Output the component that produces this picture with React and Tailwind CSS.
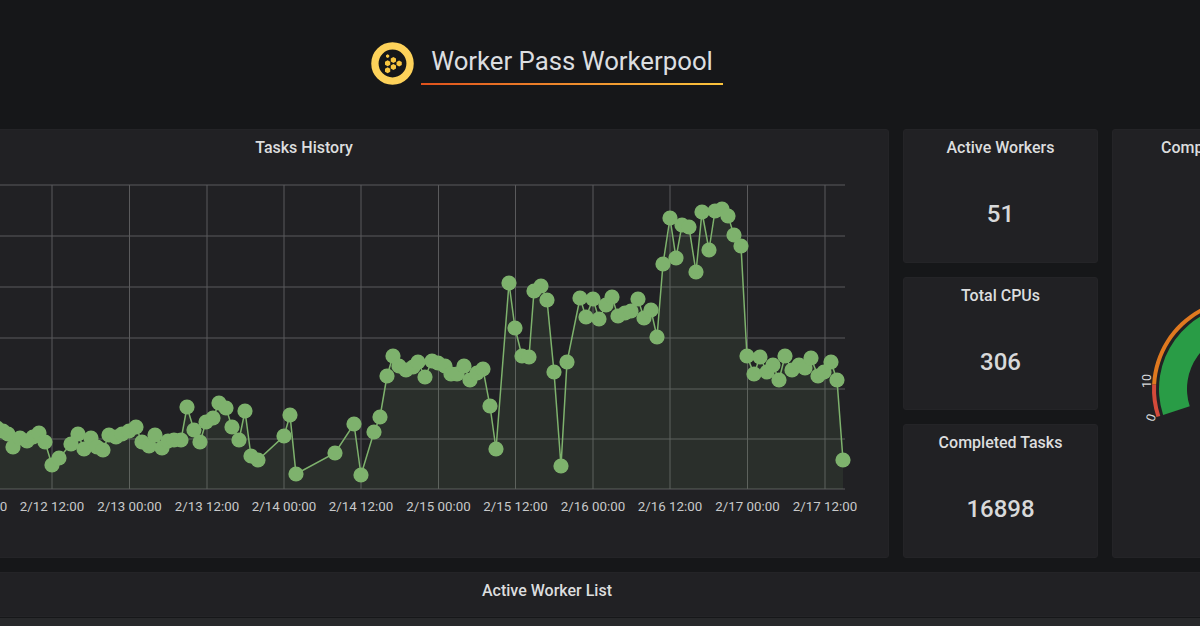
import React from "react";

const pts = [[-3,428],[3,431],[8,434],[13,447],[20,438],[27,441],[33,437],[39,433],[45,442],[52,465],[59,458],[71,444],[78,434],[84,449],[91,438],[97,447],[103,450],[109,435],[116,437],[122,434],[129,431],[136,427],[142,442],[149,446],[155,435],[162,448],[168,441],[174,440],[181,440],[187,407],[194,430],[200,442],[206,422],[213,418],[219,403],[226,408],[232,427],[239,440],[245,411],[251,456],[258,460],[284,436],[290,415],[296,474],[335,453],[354,424],[361,475],[374,432],[380,417],[387,376],[393,356],[399,366],[406,370],[413,367],[418,362],[425,377],[432,361],[438,363],[445,366],[451,374],[457,374],[464,366],[470,380],[477,373],[483,369],[490,406],[496,449],[509,283],[515,328],[522,356],[529,357],[534,291],[541,286],[547,300],[554,372],[561,466],[567,362],[580,298],[586,317],[593,299],[599,319],[606,305],[612,297],[618,316],[625,313],[631,311],[638,299],[644,318],[651,310],[657,337],[663,264],[670,218],[676,258],[682,225],[689,227],[696,272],[702,212],[709,250],[715,211],[722,209],[728,216],[734,235],[741,246],[747,356],[754,374],[760,357],[767,372],[773,365],[779,380],[785,356],[792,370],[799,365],[805,368],[811,358],[818,376],[824,372],[831,362],[837,380],[843,460]];

const vLines = [-25,52,129.5,207,284,361,438.5,515.5,593,670,747.5,825];
const hLines = [185,236,287,338,389,439,489];
const labels = [[-25,"2/12 00:00"],[52,"2/12 12:00"],[129.5,"2/13 00:00"],[207,"2/13 12:00"],[284,"2/14 00:00"],[361,"2/14 12:00"],[438.5,"2/15 00:00"],[515.5,"2/15 12:00"],[593,"2/16 00:00"],[670,"2/16 12:00"],[747.5,"2/17 00:00"],[825,"2/17 12:00"]];

function TasksChart() {
  const line = pts.map((p) => p.join(",")).join(" ");
  const area = `-60,489 ${line} 843,489`;
  return (
    <svg viewBox="-280 166 1168 391" className="block w-full h-[391px]">
      {vLines.map((x) => (
        <line key={x} x1={x} x2={x} y1={185} y2={489} stroke="#5a5a5c" strokeWidth="1" />
      ))}
      {hLines.map((y) => (
        <line key={y} x1={-265} x2={845} y1={y} y2={y} stroke="#5a5a5c" strokeWidth="1" />
      ))}
      <polygon points={area} fill="#7eb26d" fillOpacity="0.1" />
      <polyline points={line} fill="none" stroke="#7eb26d" strokeWidth="1.5" />
      {pts.map(([x, y], i) => (
        <circle key={i} cx={x} cy={y} r="7.6" fill="#7eb26d" />
      ))}
      {labels.map(([x, t]) => (
        <text key={t} x={x} y={510.5} textAnchor="middle" fontSize="13.3" fill="#c8c9ca" fontFamily="Roboto, sans-serif">
          {t}
        </text>
      ))}
    </svg>
  );
}

function polar(cx, cy, r, deg) {
  const a = (deg * Math.PI) / 180;
  return [cx + r * Math.cos(a), cy - r * Math.sin(a)];
}

function band(r1, r2, from, to) {
  const cx = 131, cy = 260;
  const large = from - to > 180 ? 1 : 0;
  const [ax, ay] = polar(cx, cy, r2, from);
  const [bx, by] = polar(cx, cy, r2, to);
  const [c, d] = polar(cx, cy, r1, to);
  const [e, f] = polar(cx, cy, r1, from);
  return `M${ax} ${ay}A${r2} ${r2} 0 ${large} 1 ${bx} ${by}L${c} ${d}A${r1} ${r1} 0 ${large} 0 ${e} ${f}Z`;
}

function Gauge() {
  return (
    <svg viewBox="1 37 261 300" className="block w-full h-[300px]">
      <path d={band(56, 84, 198, -18)} fill="#299c46" />
      <path d={band(87, 91, 198, 177)} fill="#d44a3a" />
      <path d={band(87, 91, 177, 60)} fill="#e0791f" />
      <text x={0} y={0} transform="translate(43 290) rotate(-72)" textAnchor="middle" fontSize="12.5" fill="#d8d9da" fontFamily="Roboto, sans-serif">0</text>
      <text x={0} y={0} transform="translate(39 252) rotate(-90)" textAnchor="middle" fontSize="12.5" fill="#d8d9da" fontFamily="Roboto, sans-serif">10</text>
    </svg>
  );
}

function hex(cx, cy, r) {
  return [0, 1, 2, 3, 4, 5]
    .map((i) => {
      const a = (Math.PI / 3) * i + Math.PI / 6;
      return `${cx + r * Math.cos(a)},${cy + r * Math.sin(a)}`;
    })
    .join(" ");
}

function Logo() {
  return (
    <svg viewBox="0 0 44 44" className="w-[43px] h-[43px] shrink-0">
      <circle cx="22" cy="22" r="18" fill="none" stroke="#fdd25a" strokeWidth="7.5" />
      {[[17,14.5,1.9],[22.9,18.4,3.1],[17,21.8,3.1],[28.8,22,3.1],[22.9,25.6,3.1],[17,29,3.1]].map(([x, y, r], i) => (
        <polygon key={i} points={hex(x, y, r)} fill="#f9c640" />
      ))}
    </svg>
  );
}

function Stat({ title, value }) {
  return (
    <div className="flex-1 flex flex-col items-center bg-[#212124] border border-[#242427] rounded-[3px]">
      <div className="h-[36px] leading-[35px] text-[16px] font-medium text-[#dcddde]">{title}</div>
      <div className="flex-1 flex items-center justify-center text-[24px] font-medium text-[#d8d9da]">{value}</div>
    </div>
  );
}

export default function App() {
  return (
    <div className="w-[1200px] h-[626px] overflow-hidden bg-[#161719] font-['Roboto',sans-serif]">
      <div className="w-[1656px] ml-[-281px]">
        <div className="h-[129px] flex justify-center items-start pt-[42px] gap-[7px]">
          <Logo />
          <div className="flex flex-col -mt-[1px]">
            <div className="px-[10px] h-[42px] leading-[41px] text-[25.75px] text-[#dcdee0]">Worker Pass Workerpool</div>
            <div className="h-[2px] bg-[linear-gradient(to_right,#e0521c,#fbc53d)]" />
          </div>
        </div>
        <div className="flex gap-[14px] h-[429px]">
          <div className="w-[1170px] bg-[#212124] border border-[#242427] rounded-[3px] overflow-hidden">
            <div className="h-[36px] leading-[35px] text-center text-[16px] font-medium text-[#dcddde]">Tasks History</div>
            <TasksChart />
          </div>
          <div className="w-[195px] flex flex-col gap-[14px]">
            <Stat title="Active Workers" value="51" />
            <Stat title="Total CPUs" value="306" />
            <Stat title="Completed Tasks" value="16898" />
          </div>
          <div className="w-[263px] bg-[#212124] border border-[#242427] rounded-[3px] overflow-hidden">
            <div className="h-[36px] leading-[35px] text-center text-[16px] font-medium text-[#dcddde] whitespace-nowrap">Completed Tasks Ratio</div>
            <Gauge />
          </div>
        </div>
        <div className="mt-[14px] h-[45px] bg-[#212124] border border-[#242427] rounded-[3px] text-center leading-[36px] text-[16px] font-medium text-[#dcddde]">
          Active Worker List
        </div>
        <div className="mt-[1px] h-[10px] bg-[#28292b]" />
      </div>
    </div>
  );
}
